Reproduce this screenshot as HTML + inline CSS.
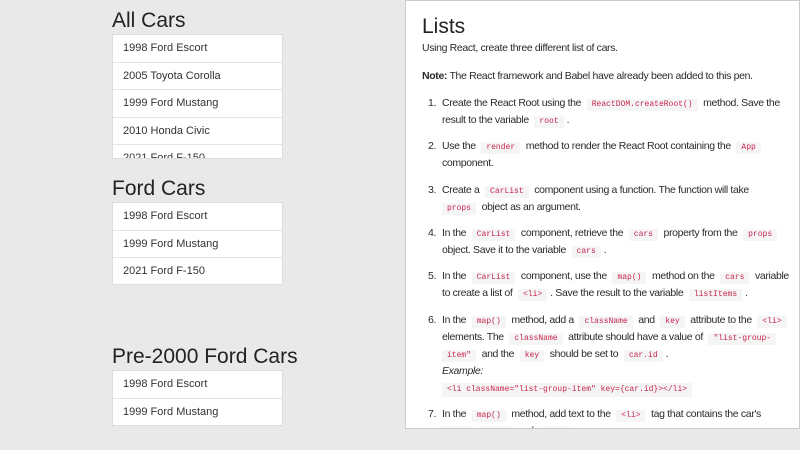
<!DOCTYPE html>
<html><head><style>
*{margin:0;padding:0;box-sizing:border-box}
body{width:800px;height:450px;background:#e9e9e9;font-family:"Liberation Sans",sans-serif;color:#222;position:relative;overflow:hidden}
h2{position:absolute;left:112px;font-weight:normal;font-size:21px;color:#222}
.lg{position:absolute;left:112px;width:171px;background:#fff;overflow:hidden;border:1px solid #ddd}
.lg div{height:27.5px;line-height:27px;padding-left:10px;font-size:11px;color:#333;border-bottom:1px solid #e4e4e4}
#panel{position:absolute;left:405px;top:0;width:395px;height:429px;background:#fff;border:1px solid #ccc;overflow:hidden;font-size:10.5px;letter-spacing:-0.35px;color:#2a2a2a}
#panel h1{position:absolute;left:16px;top:14px;font-weight:normal;font-size:21px;color:#222;letter-spacing:0}
.p{position:absolute;left:16px;white-space:nowrap}
.li{position:absolute;left:22px;width:370px;line-height:17px;white-space:nowrap}
.li .n{position:absolute;left:0}
.li .t{margin-left:14px}
code{font-family:"Liberation Mono",monospace;font-size:8px;letter-spacing:0;color:#c7254e;background:#f5f5f5;padding:1px 5px;margin:0 3px;line-height:10px;display:inline-block}
</style></head><body>
<h2 style="top:9px">All Cars</h2>
<div class="lg" style="top:34px;height:125px"><div>1998 Ford Escort</div><div>2005 Toyota Corolla</div><div>1999 Ford Mustang</div><div>2010 Honda Civic</div><div>2021 Ford F-150</div></div>
<h2 style="top:177px">Ford Cars</h2>
<div class="lg" style="top:202px;height:83px"><div>1998 Ford Escort</div><div>1999 Ford Mustang</div><div style="border:0">2021 Ford F-150</div></div>
<h2 style="top:345px">Pre-2000 Ford Cars</h2>
<div class="lg" style="top:370px;height:56px"><div>1998 Ford Escort</div><div style="border:0">1999 Ford Mustang</div></div>
<div id="panel">
<h1>Lists</h1>
<div class="p" style="top:41px">Using React, create three different list of cars.</div>
<div class="p" style="top:69px"><b>Note:</b> The React framework and Babel have already been added to this pen.</div>
<div class="li" style="top:94px"><span class="n">1.</span><div class="t">Create the React Root using the <code>ReactDOM.createRoot()</code> method. Save the<br>result to the variable <code>root</code>.</div></div>
<div class="li" style="top:137px"><span class="n">2.</span><div class="t">Use the <code>render</code> method to render the React Root containing the <code>App</code><br>component.</div></div>
<div class="li" style="top:181px"><span class="n">3.</span><div class="t">Create a <code>CarList</code> component using a function. The function will take<br><code style="margin-left:0">props</code> object as an argument.</div></div>
<div class="li" style="top:224px"><span class="n">4.</span><div class="t">In the <code>CarList</code> component, retrieve the <code>cars</code> property from the <code>props</code><br>object. Save it to the variable <code>cars</code>.</div></div>
<div class="li" style="top:267px"><span class="n">5.</span><div class="t">In the <code>CarList</code> component, use the <code>map()</code> method on the <code>cars</code> variable<br>to create a list of <code>&lt;li&gt;</code>. Save the result to the variable <code>listItems</code>.</div></div>
<div class="li" style="top:311px"><span class="n">6.</span><div class="t">In the <code>map()</code> method, add a <code>className</code> and <code>key</code> attribute to the <code>&lt;li&gt;</code><br>elements. The <code>className</code> attribute should have a value of <code>"list-group-</code><br><code style="margin-left:0">item"</code> and the <code>key</code> should be set to <code>car.id</code>.<br><i>Example:</i><br><code style="margin:0;padding:2px 5px">&lt;li className="list-group-item" key={car.id}&gt;&lt;/li&gt;</code></div></div>
<div class="li" style="top:405px"><span class="n">7.</span><div class="t">In the <code>map()</code> method, add text to the <code>&lt;li&gt;</code> tag that contains the car's<br><code style="margin-left:0">year</code>, <code>make</code> and <code>model</code>.</div></div>
</div>
</body></html>
